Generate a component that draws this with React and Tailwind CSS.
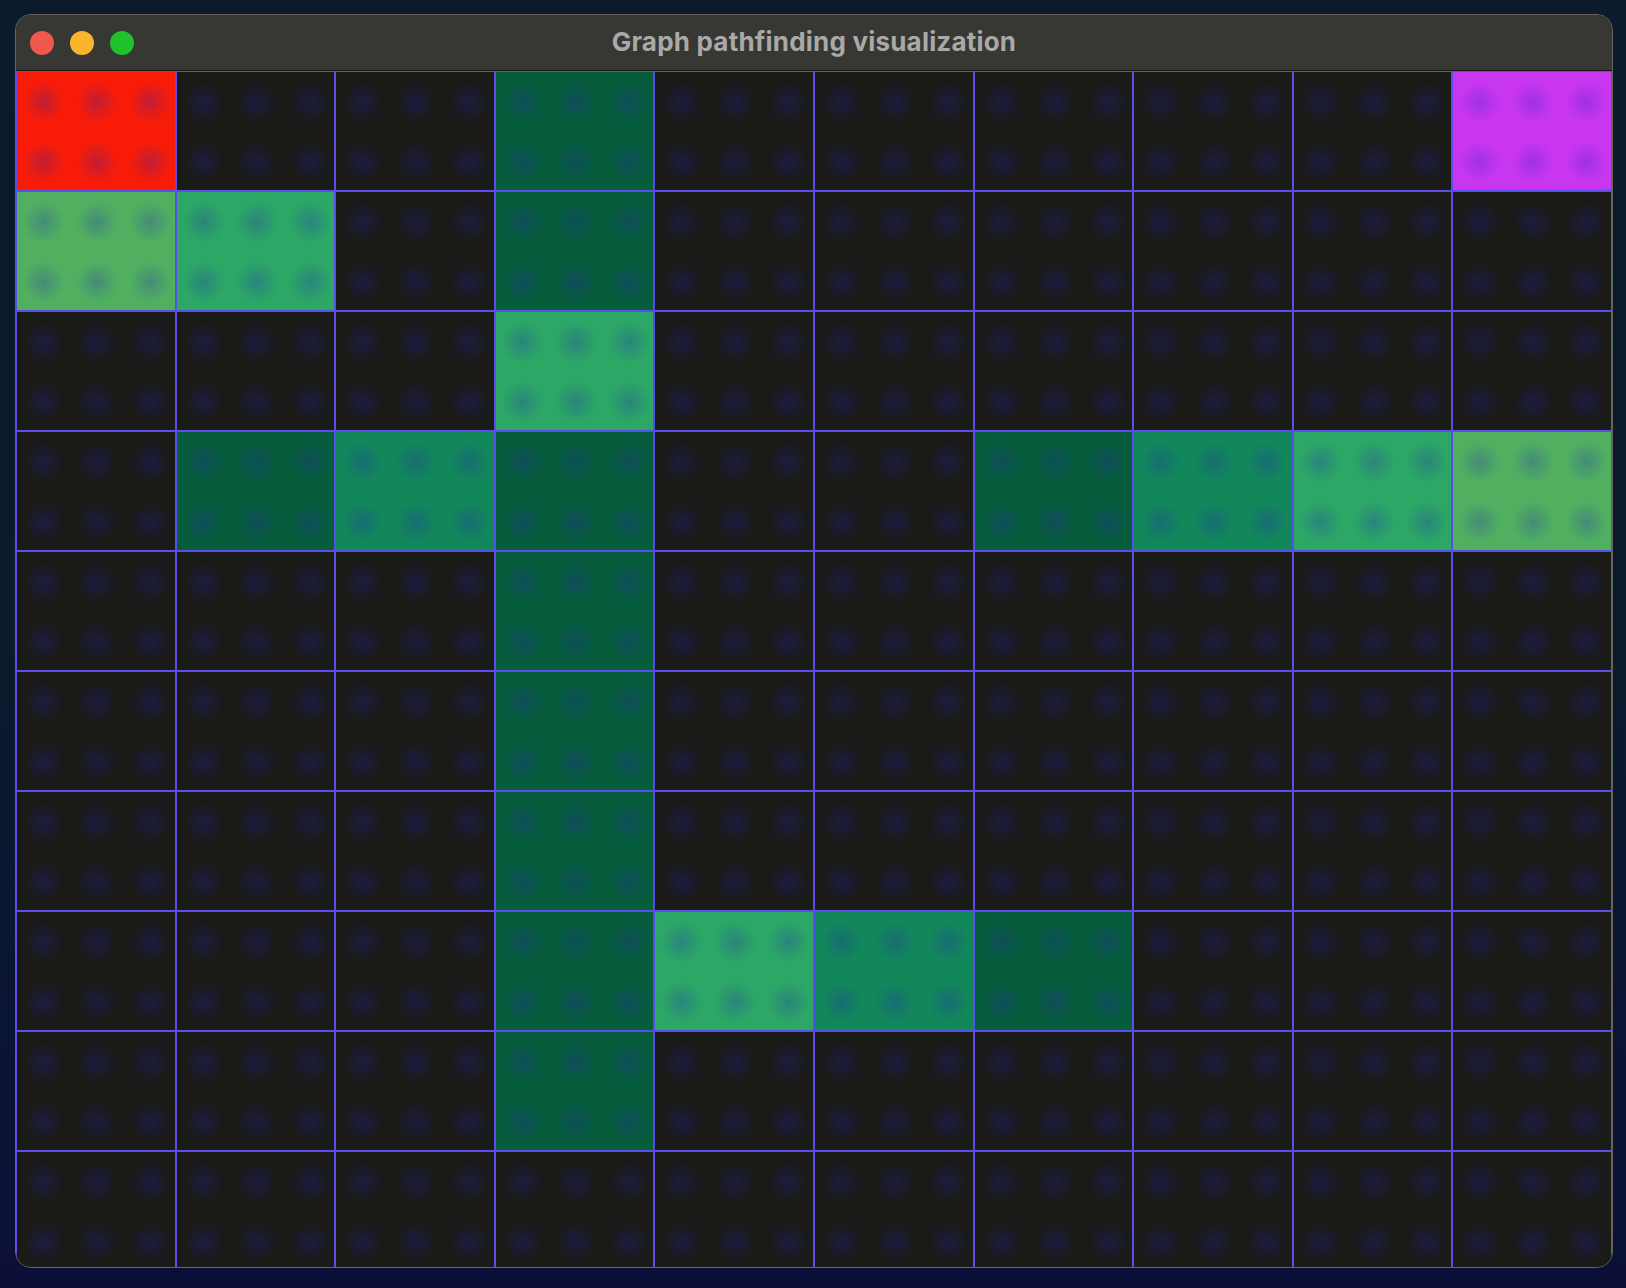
const COLORS = {
  s: "bg-[#f81c08]",
  e: "bg-[#c936f0]",
  d: "bg-[#065d3b]",
  m: "bg-[#12885a]",
  g: "bg-[#2ca766]",
  l: "bg-[#50b060]",
  ".": "bg-[#1a1a17]",
};

// one string per row, one char per cell
const GRID = [
  "s..d.....e",
  "lg.d......",
  "...g......",
  ".dmd..dmgl",
  "...d......",
  "...d......",
  "...d......",
  "...dgmd...",
  "...d......",
  "..........",
];

function Cell({ kind }) {
  return (
    <div
      className={`h-[120px] border border-[#5a4ded] ${COLORS[kind]} bg-[radial-gradient(circle,rgba(35,35,185,0.26)_0,transparent_21px)] bg-[length:53.33px_60px] bg-left-top`}
    />
  );
}

export default function App() {
  return (
    <div className="w-[1626px] h-[1288px] bg-gradient-to-b from-[#0c1b2b] via-[#0b1a2c] to-[#0b0f38] pt-[14px] pl-[15px] overflow-hidden">
      <div className="w-[1598px] h-[1254px] rounded-[16px] overflow-hidden border border-[#66665c] bg-[#1a1a17] flex flex-col">
        <div className="relative h-[56px] shrink-0 bg-[#373734] border-b border-[#151514] flex items-center">
          <div className="flex items-center gap-[16px] pl-[14px]">
            <span className="w-[24px] h-[24px] rounded-full bg-[#f0584e]" />
            <span className="w-[24px] h-[24px] rounded-full bg-[#fbb52c]" />
            <span className="w-[24px] h-[24px] rounded-full bg-[#1fc22c]" />
          </div>
          <div className="absolute inset-0 flex items-center justify-center pointer-events-none pb-[3px]">
            <span className="font-['Inter',sans-serif] font-bold text-[26px] tracking-[0.2px] text-[#a9a9a7]">
              Graph pathfinding visualization
            </span>
          </div>
        </div>
        <div className="grid grid-cols-10">
          {GRID.map((row, r) =>
            row.split("").map((k, c) => <Cell key={`${r}-${c}`} kind={k} />)
          )}
        </div>
      </div>
    </div>
  );
}
